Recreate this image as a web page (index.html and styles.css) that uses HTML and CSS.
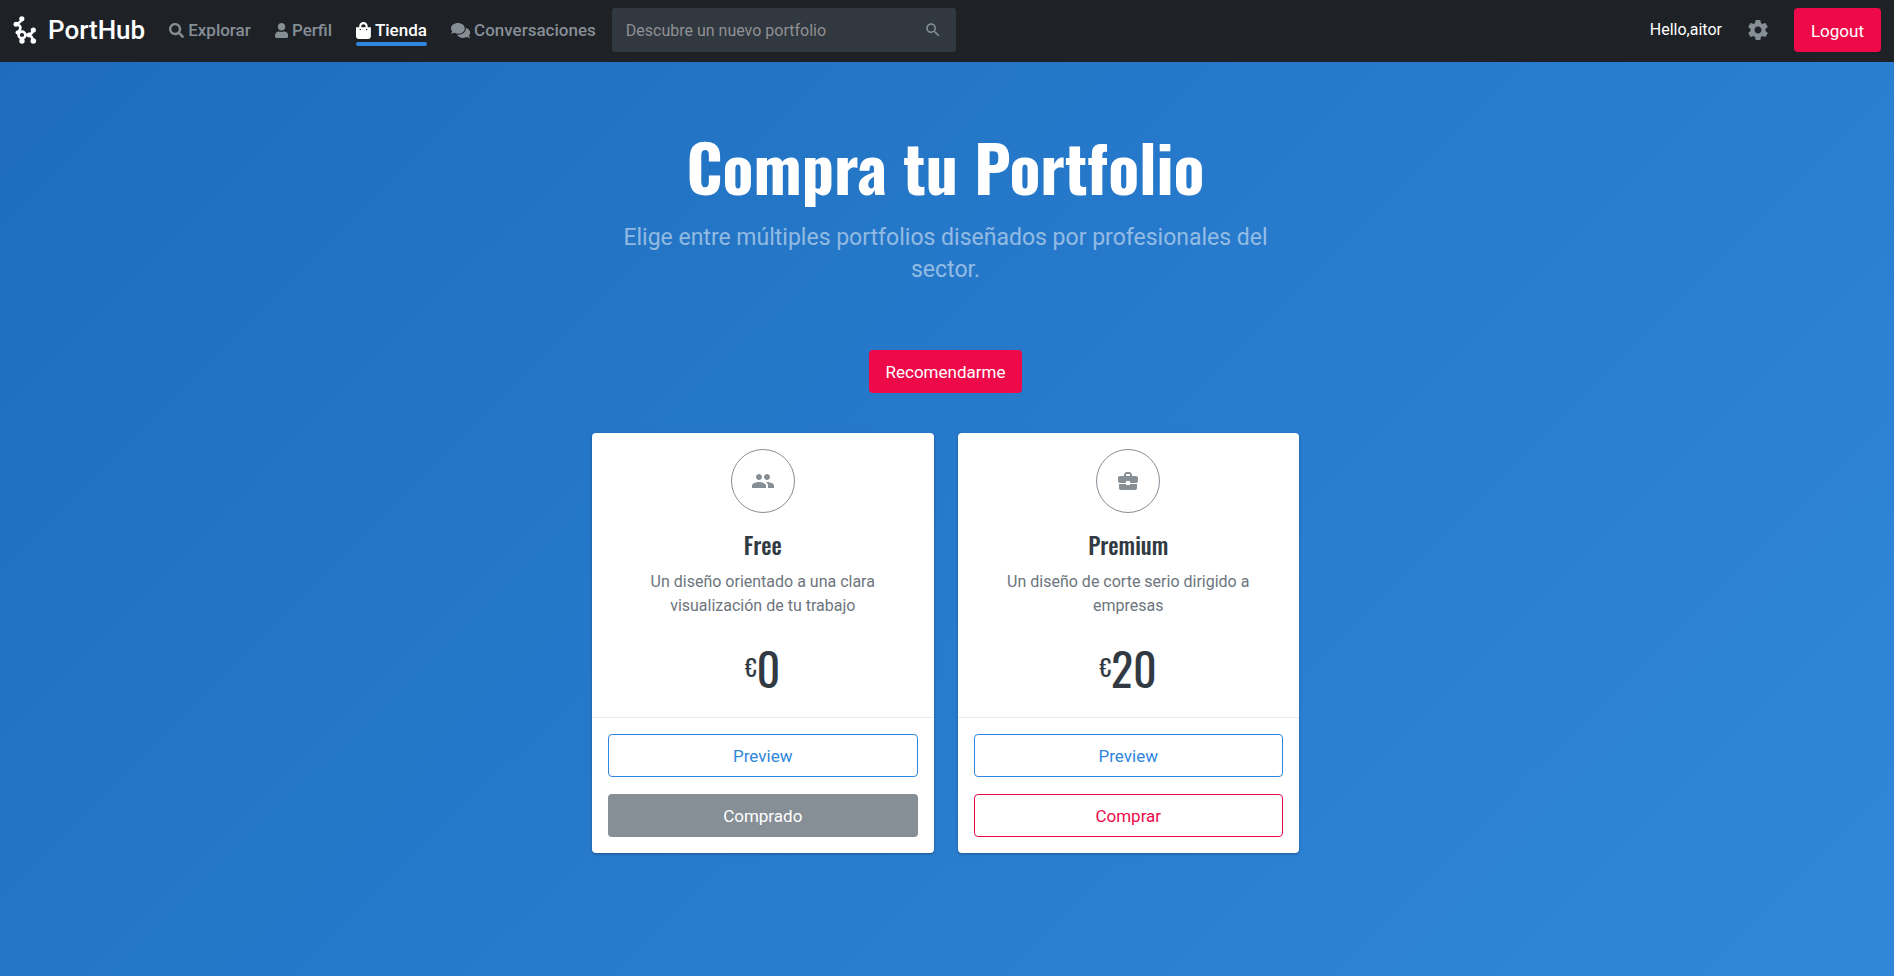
FILE: index.html
```html
<!DOCTYPE html>
<html lang="es">
<head>
<meta charset="utf-8">
<meta name="viewport" content="width=device-width, initial-scale=1">
<title>PortHub - Tienda</title>
<link rel="stylesheet" href="styles.css">
</head>
<body>
<header class="navbar">
  <a class="brand" href="#">
    <svg class="brand-logo" viewBox="0 0 24 28" aria-hidden="true">
      <g fill="none" stroke="currentColor" stroke-width="2.600" stroke-linecap="round" stroke-linejoin="round">
        <path d="M8.800 3Q8 6.500 3 8Q7 9 7.500 11.500Q7.500 14 5 16M9 22V25.500M12.500 19H16M20.300 14Q19 18 16 19Q19 20 20.300 25"/>
        <circle cx="9" cy="19" r="3.400"/>
      </g>
      <g fill="currentColor">
        <circle cx="8.800" cy="2.800" r="2.600"/><circle cx="3" cy="8.300" r="2.500"/><circle cx="4.500" cy="16.500" r="2"/>
        <circle cx="9" cy="25" r="2.700"/><circle cx="20.300" cy="14" r="2.600"/><circle cx="20.300" cy="25" r="2.800"/><circle cx="16" cy="19" r="2.400"/>
      </g>
    </svg>
    <span>PortHub</span>
  </a>
  <nav class="menu">
    <a class="menu-link" href="#"><svg class="menu-icon" viewBox="0 0 512 512" aria-hidden="true"><path d="M505 442.700L405.300 343c-4.500-4.500-10.600-7-17-7H372c27.600-35.300 44-79.700 44-128C416 93.100 322.900 0 208 0S0 93.100 0 208s93.100 208 208 208c48.300 0 92.700-16.400 128-44v16.300c0 6.400 2.500 12.500 7 17l99.700 99.700c9.400 9.400 24.600 9.400 33.900 0l28.300-28.300c9.400-9.400 9.400-24.600.1-34zM208 336c-70.700 0-128-57.200-128-128 0-70.700 57.200-128 128-128 70.700 0 128 57.200 128 128 0 70.700-57.200 128-128 128z"/></svg>Explorar</a>
    <a class="menu-link" href="#"><svg class="menu-icon" viewBox="0 0 448 512" aria-hidden="true"><path d="M224 256c70.700 0 128-57.300 128-128S294.700 0 224 0 96 57.300 96 128s57.300 128 128 128zm89.600 32h-16.700c-22.200 10.200-46.900 16-72.900 16s-50.600-5.800-72.900-16h-16.700C60.200 288 0 348.200 0 422.400V464c0 26.500 21.500 48 48 48h352c26.500 0 48-21.500 48-48v-41.600c0-74.200-60.200-134.400-134.400-134.400z"/></svg>Perfil</a>
    <a class="menu-link active" href="#" aria-current="page"><svg class="menu-icon bag" viewBox="0 0 448 512" aria-hidden="true"><path d="M352 160v-32C352 57.420 294.579 0 224 0 153.420 0 96 57.420 96 128v32H0v272c0 44.183 35.817 80 80 80h288c44.183 0 80-35.817 80-80V160h-96zm-192-32c0-35.290 28.710-64 64-64s64 28.710 64 64v32H160v-32zm160 120c-13.255 0-24-10.745-24-24s10.745-24 24-24 24 10.745 24 24-10.745 24-24 24zm-192 0c-13.255 0-24-10.745-24-24s10.745-24 24-24 24 10.745 24 24-10.745 24-24 24z"/></svg>Tienda</a>
    <a class="menu-link" href="#"><svg class="menu-icon comments" viewBox="0 0 576 512" aria-hidden="true"><path d="M416 192c0-88.400-93.100-160-208-160S0 103.600 0 192c0 34.300 14.100 65.900 38 92-13.400 30.200-35.500 54.200-35.800 54.500-2.200 2.300-2.800 5.700-1.500 8.700S4.800 352 8 352c36.600 0 66.900-12.300 88.700-25 32.200 15.700 70.300 25 111.300 25 114.900 0 208-71.600 208-160zm122 220c23.900-26 38-57.700 38-92 0-66.900-53.500-124.200-129.300-148.100.9 6.600 1.300 13.300 1.300 20.100 0 105.900-107.700 192-240 192-10.800 0-21.300-.8-31.700-1.900C207.800 439.600 281.800 480 368 480c41 0 79.100-9.200 111.300-25 21.800 12.700 52.100 25 88.700 25 3.200 0 6.100-1.900 7.300-4.800 1.300-2.900.7-6.300-1.500-8.700-.3-.3-22.400-24.200-35.800-54.500z"/></svg>Conversaciones</a>
  </nav>
  <form class="search" role="search">
    <input class="search-input" type="search" placeholder="Descubre un nuevo portfolio" aria-label="Descubre un nuevo portfolio">
    <button class="search-button" type="button" aria-label="Buscar"><svg viewBox="0 0 24 24" aria-hidden="true"><path d="M15.500 14h-.79l-.28-.27C15.410 12.590 16 11.110 16 9.500 16 5.910 13.090 3 9.500 3S3 5.910 3 9.500 5.910 16 9.500 16c1.610 0 3.090-.59 4.230-1.570l.27.28v.79l5 4.990L20.490 19l-4.990-5zm-6 0C7.010 14 5 11.990 5 9.500S7.010 5 9.500 5 14 7.010 14 9.500 11.990 14 9.500 14z"/></svg></button>
  </form>
  <div class="account">
    <span class="greeting">Hello,aitor</span>
    <a class="settings" href="#" aria-label="Ajustes"><svg viewBox="0 0 24 24" aria-hidden="true"><path d="M19.430 12.980c.04-.32.07-.64.07-.98s-.03-.66-.07-.98l2.110-1.650c.19-.15.24-.42.12-.64l-2-3.460c-.12-.22-.39-.3-.61-.22l-2.490 1c-.52-.4-1.080-.73-1.690-.98l-.38-2.650C14.460 2.180 14.250 2 14 2h-4c-.25 0-.46.18-.49.42l-.38 2.650c-.61.25-1.170.59-1.690.98l-2.490-1c-.23-.09-.49 0-.61.22l-2 3.460c-.13.22-.07.49.12.64l2.110 1.650c-.04.32-.07.65-.07.98s.03.66.07.98l-2.110 1.650c-.19.15-.24.42-.12.64l2 3.460c.12.22.39.3.61.22l2.490-1c.52.4 1.080.73 1.690.98l.38 2.650c.03.24.24.42.49.42h4c.25 0 .46-.18.49-.42l.38-2.650c.61-.25 1.170-.59 1.690-.98l2.490 1c.23.09.49 0 .61-.22l2-3.460c.12-.22.07-.49-.12-.64l-2.110-1.650zM12 15.500c-1.930 0-3.500-1.570-3.500-3.500s1.570-3.500 3.500-3.500 3.500 1.570 3.500 3.500-1.570 3.500-3.500 3.500z"/></svg></a>
    <button class="btn btn-danger" type="button">Logout</button>
  </div>
</header>
<main class="shop">
  <h1 class="title">Compra tu Portfolio</h1>
  <p class="lead">Elige entre múltiples portfolios diseñados por profesionales del sector.</p>
  <button class="btn btn-danger" type="button">Recomendarme</button>
  <section class="plans">
    <article class="card">
      <div class="card-body">
        <div class="plan-icon"><svg viewBox="0 0 24 24" aria-hidden="true"><path d="M16 11c1.660 0 2.990-1.340 2.990-3S17.660 5 16 5c-1.660 0-3 1.340-3 3s1.340 3 3 3zm-8 0c1.660 0 2.990-1.340 2.990-3S9.660 5 8 5C6.340 5 5 6.340 5 8s1.340 3 3 3zm0 2c-2.330 0-7 1.170-7 3.500V19h14v-2.500c0-2.330-4.670-3.500-7-3.500zm8 0c-.29 0-.62.02-.97.05 1.160.84 1.970 1.970 1.970 3.450V19h6v-2.500c0-2.330-4.670-3.500-7-3.500z"/></svg></div>
        <h2 class="plan-name">Free</h2>
        <p class="plan-text">Un diseño orientado a una clara visualización de tu trabajo</p>
        <p class="price"><span class="currency">€</span><span>0</span></p>
      </div>
      <div class="card-footer">
        <button class="btn btn-outline" type="button">Preview</button>
        <button class="btn btn-muted" type="button">Comprado</button>
      </div>
    </article>
    <article class="card">
      <div class="card-body">
        <div class="plan-icon"><svg viewBox="0 0 24 24" aria-hidden="true"><path d="M10 16v-1H3.010L3 19c0 1.110.89 2 2 2h14c1.110 0 2-.89 2-2v-4h-7v1h-4zm10-9h-4.010V5l-2-2h-4l-2 2v2H4c-1.100 0-2 .9-2 2v3c0 1.110.89 2 2 2h6v-2h4v2h6c1.100 0 2-.9 2-2V9c0-1.100-.9-2-2-2zm-6 0h-4V5h4v2z"/></svg></div>
        <h2 class="plan-name">Premium</h2>
        <p class="plan-text">Un diseño de corte serio dirigido a empresas</p>
        <p class="price"><span class="currency">€</span><span>20</span></p>
      </div>
      <div class="card-footer">
        <button class="btn btn-outline" type="button">Preview</button>
        <button class="btn btn-outline-danger" type="button">Comprar</button>
      </div>
    </article>
  </section>
</main>
</body>
</html>
```
FILE: styles.css
```css
* { box-sizing: border-box; }

body {
  margin: 0;
  min-height: 100vh;
  display: flex;
  flex-direction: column;
  font-family: Roboto, "Liberation Sans", sans-serif;
  font-size: 16px;
  line-height: 24px;
  color: #313a42;
}

h1, h2, p { margin: 0; }
a { color: inherit; text-decoration: none; }
svg { display: block; fill: currentColor; }

.navbar {
  display: flex;
  align-items: center;
  padding: 8px 13px 10px;
  background: #1e2126;
  color: #868e96;
}

.brand {
  display: flex;
  align-items: center;
  gap: 11px;
  margin-right: 24px;
  color: #fff;
  font-size: 26px;
  font-weight: 500;
  line-height: 32px;
}
.brand-logo { width: 24px; height: 28px; }

.menu { display: flex; gap: 24px; }
.menu-link {
  display: flex;
  align-items: center;
  gap: 4px;
  position: relative;
  font-size: 17px;
  font-weight: 500;
}
.menu-icon { height: 15px; }
.menu-icon.bag { height: 17px; }
.menu-icon.comments { height: 17px; }
.menu-link.active { color: #fff; }
.menu-link.active::after {
  content: "";
  position: absolute;
  left: 0;
  right: 0;
  top: 24px;
  height: 4px;
  border-radius: 2px;
  background: #2f86de;
}

.search {
  display: flex;
  align-items: center;
  width: 344px;
  height: 44px;
  margin-left: 16px;
  padding: 0 14px;
  border-radius: 3px;
  background: #313840;
}
.search-input {
  flex: 1;
  min-width: 0;
  padding: 2px 0 0;
  border: 0;
  outline: 0;
  background: transparent;
  color: #fff;
  font: inherit;
  font-size: 16px;
}
.search-input::placeholder { color: #8f9193; opacity: 1; }
.search-button {
  padding: 0;
  border: 0;
  background: transparent;
  color: #868e96;
}
.search-button svg { width: 18px; height: 18px; }

.account {
  display: flex;
  align-items: center;
  align-self: stretch;
  margin-left: auto;
}
.account .btn { align-self: stretch; }
.greeting { color: #fff; }
.settings { margin: 0 24px; }
.settings svg { width: 24px; height: 24px; }

.btn {
  padding: 9px 16px 7px;
  border: 1px solid transparent;
  border-radius: 4px;
  font: inherit;
  font-size: 17px;
  line-height: 25px;
}
.btn-danger { background: #ee0a49; color: #fff; }
.btn-muted { background: #868e96; color: #fff; }
.btn-outline { background: #fff; border-color: #2f86de; color: #2f86de; }
.btn-outline-danger { background: #fff; border-color: #ee0a49; color: #ee0a49; }

.shop {
  flex: 1;
  display: flex;
  flex-direction: column;
  align-items: center;
  padding: 60px 15px 60px 12px;
  background: linear-gradient(135deg, #1e6dbd, #3087da);
  text-align: center;
}
.title {
  color: #fff;
  font-family: Oswald, "Liberation Sans Narrow", "Liberation Sans", sans-serif;
  font-size: 64px;
  font-weight: 700;
  line-height: 88px;
}
.lead {
  max-width: 660px;
  margin: 12px 0 64px;
  color: rgba(255, 255, 255, 0.5);
  font-size: 23px;
  line-height: 32px;
}

.plans {
  display: grid;
  grid-template-columns: 1fr 1fr;
  gap: 24px;
  width: 100%;
  max-width: 707px;
  margin-top: 40px;
}
.card {
  border-radius: 4px;
  background: #fff;
  box-shadow: 0 1px 3px rgba(0, 0, 0, 0.3);
}
.card-body {
  display: flex;
  flex-direction: column;
  align-items: center;
  padding: 16px 48px 24px;
}
.plan-icon {
  display: grid;
  place-items: center;
  width: 64px;
  height: 64px;
  border: 1px solid #868e96;
  border-radius: 50%;
  color: #868e96;
}
.plan-icon svg { width: 24px; height: 24px; }
.plan-name {
  margin: 16px 0 9px;
  font-family: Oswald, "Liberation Sans Narrow", "Liberation Sans", sans-serif;
  font-size: 23px;
  font-weight: 500;
  line-height: 32px;
}
.plan-text { color: #6c757d; }
.price {
  display: flex;
  align-items: flex-start;
  margin-top: 23px;
  font-family: Oswald, "Liberation Sans Narrow", "Liberation Sans", sans-serif;
  font-size: 46px;
  line-height: 52px;
}
.currency { font-size: 23px; line-height: 52px; }
.card-footer {
  display: flex;
  flex-direction: column;
  gap: 17px;
  padding: 16px;
  border-top: 1px solid #e9ecef;
}
```
